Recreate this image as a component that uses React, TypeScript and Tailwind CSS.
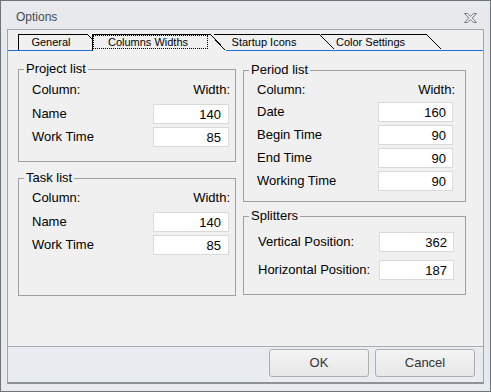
import React from 'react';

function Group({ title, className, children }: { title: string; className: string; children: React.ReactNode }) {
  return (
    <div className={`relative border border-[#a0a0a0] ${className}`}>
      <span className="absolute -top-[9px] left-[5px] bg-[#f0f0f0] px-[2px] leading-[15px]">{title}</span>
      {children}
    </div>
  );
}

function Field({ label, value, w = 'w-[75px]', pad = 'pr-[6px]' }: { label: string; value: string; w?: string; pad?: string }) {
  return (
    <div className="flex h-[20px] items-center justify-between">
      <span className="leading-[16px]">{label}</span>
      <input
        readOnly
        defaultValue={value}
        className={`h-[20px] ${w} border border-[#d9d9d9] bg-white text-right ${pad} leading-[18px] outline-none`}
      />
    </div>
  );
}

function TabDiag({ tall }: { tall?: boolean }) {
  const h = tall ? 17 : 16;
  return (
    <svg
      className="absolute -top-px left-full"
      width="16"
      height={h}
      viewBox={`0 0 16 ${h}`}
      shapeRendering="crispEdges"
    >
      <polygon points={`0,0 16,${h} 0,${h}`} fill="#f0f0f0" />
      <line x1="0.5" y1="0.5" x2="15.5" y2={h - 0.5} stroke="#000" strokeWidth="1" />
    </svg>
  );
}

export default function App() {
  return (
    <div className="flex h-[392px] w-[491px] flex-col border border-[#6c757d] bg-[#e7e9ec] font-['Liberation_Sans',Arial,sans-serif] text-[13px] text-black">
      {/* title bar */}
      <div className="flex h-[28px] items-start justify-between pl-[15px] pr-[13px] pt-[9px]">
        <span className="text-[12px] leading-[14px] text-[#454a52]">Options</span>
        <svg className="mt-[3px]" width="13" height="10" viewBox="0 0 13 10">
          <polygon
            points="0.5,0.5 3.5,0.5 6.5,3.3 9.5,0.5 12.5,0.5 8.3,5 12.5,9.5 9.5,9.5 6.5,6.7 3.5,9.5 0.5,9.5 4.7,5"
            fill="none"
            stroke="#767d85"
            strokeWidth="1"
          />
        </svg>
      </div>

      {/* tab panel */}
      <div className="mx-[6px] flex h-[355px] flex-col border-x border-t border-b-2 border-[#a0a5aa] border-b-[#8d9297] bg-[#f0f0f0]">
        <div className="flex h-[21px] items-end border-b border-[#1e73d2] pl-[10px] text-[11px]">
          <div className="relative z-20 flex h-[16px] w-[69px] justify-center border-l border-t border-black bg-[#f0f0f0] pr-[4px] leading-[15px]">
            General
            <TabDiag />
          </div>
          <div className="relative z-30 -mb-px ml-[5px] flex h-[17px] w-[118px] justify-center border-l border-t border-black bg-[#f0f0f0] pr-[7px] leading-[15px]">
            <span className="absolute left-0 top-0 h-[14px] w-[115px] border border-dotted border-black" />
            Columns Widths
            <TabDiag tall />
          </div>
          <div className="relative z-10 ml-[4px] flex h-[16px] w-[105px] justify-center border-t border-black bg-[#f0f0f0] pr-[5px] leading-[15px]">
            Startup Icons
            <TabDiag />
          </div>
          <div className="relative z-0 ml-[2px] flex h-[16px] w-[105px] justify-center border-t border-black bg-[#f0f0f0] pr-[6px] leading-[15px]">
            Color Settings
            <TabDiag />
          </div>
        </div>

        <div className="flex h-[295px] pl-[10px]">
          <div className="flex w-[218px] flex-col pt-[18px]">
            <Group title="Project list" className="h-[93px] pl-[13px] pr-[6px] pt-[12px]">
              <div className="-mr-px flex h-[16px] justify-between leading-[16px]">
                <span>Column:</span>
                <span>Width:</span>
              </div>
              <div className="mt-[6px] flex flex-col gap-[3px]">
                <Field label="Name" value="140" w="w-[76px]" pad="pr-[7px]" />
                <Field label="Work Time" value="85" w="w-[76px]" pad="pr-[7px]" />
              </div>
            </Group>
            <Group title="Task list" className="mt-[16px] h-[118px] pl-[13px] pr-[6px] pt-[11px]">
              <div className="-mr-px flex h-[16px] justify-between leading-[16px]">
                <span>Column:</span>
                <span>Width:</span>
              </div>
              <div className="mt-[6px] flex flex-col gap-[3px]">
                <Field label="Name" value="140" w="w-[76px]" pad="pr-[7px]" />
                <Field label="Work Time" value="85" w="w-[76px]" pad="pr-[7px]" />
              </div>
            </Group>
          </div>

          <div className="ml-[7px] flex w-[223px] flex-col pt-[19px]">
            <Group title="Period list" className="h-[132px] pl-[13px] pr-[12px] pt-[11px]">
              <div className="-mr-[2px] flex h-[16px] justify-between leading-[16px]">
                <span>Column:</span>
                <span>Width:</span>
              </div>
              <div className="mt-[4px] flex flex-col gap-[3px]">
                <Field label="Date" value="160" />
                <Field label="Begin Time" value="90" />
                <Field label="End Time" value="90" />
                <Field label="Working Time" value="90" />
              </div>
            </Group>
            <Group title="Splitters" className="mt-[14px] h-[79px] pl-[14px] pr-[11px] pt-[15px]">
              <div className="flex flex-col gap-[8px]">
                <Field label="Vertical Position:" value="362" />
                <Field label="Horizontal Position:" value="187" />
              </div>
            </Group>
          </div>
        </div>

        <div className="flex h-[36px] items-start justify-end gap-[6px] border-t border-[#a9adb2] bg-[#e8ebef] pr-[8px] pt-[2px]">
          <button className="h-[28px] w-[100px] rounded-[3px] border border-[#adadad] bg-gradient-to-b from-[#f4f4f4] to-[#e7e7e7] text-[13px] text-[#333]">
            OK
          </button>
          <button className="h-[28px] w-[100px] rounded-[3px] border border-[#adadad] bg-gradient-to-b from-[#f4f4f4] to-[#e7e7e7] text-[13px] text-[#333]">
            Cancel
          </button>
        </div>
      </div>
    </div>
  );
}
